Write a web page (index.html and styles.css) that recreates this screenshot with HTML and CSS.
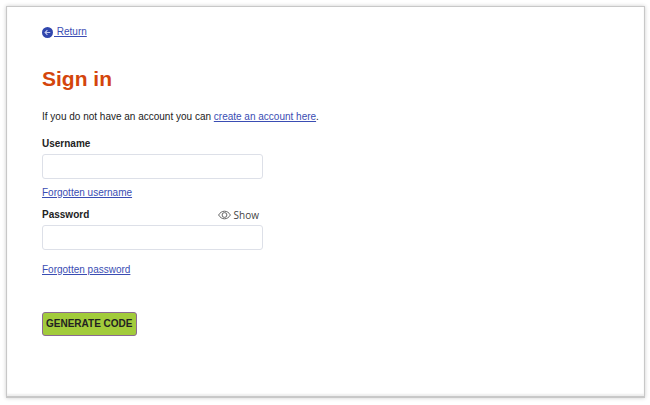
FILE: index.html
```html
<!DOCTYPE html>
<html lang="en">
<head>
<meta charset="utf-8">
<title>Sign in</title>
<link rel="stylesheet" href="styles.css">
</head>
<body>
<main class="panel">
  <a class="return" href="#"><svg class="return-icon" viewBox="0 0 10 10" aria-hidden="true"><circle cx="5" cy="5" r="5" fill="#3046ad"/><path d="M7.500 5H2.800M4.900 2.900L2.800 5l2.100 2.100" fill="none" stroke="#c3cbf0" stroke-width="1"/></svg><span class="return-text">&nbsp;Return</span></a>
  <h1 class="title">Sign in</h1>
  <p class="intro">If you do not have an account you can <a href="#">create an account here</a>.</p>
  <form class="form">
    <div class="field">
      <label class="label" for="username">Username</label>
      <input class="input" id="username" type="text">
      <a class="help" href="#">Forgotten username</a>
    </div>
    <div class="field field-password">
      <div class="label-row">
        <label class="label" for="password">Password</label>
        <button class="show" type="button"><svg class="eye" viewBox="0 0 13 10" fill="none" stroke="#666" aria-hidden="true"><path d="M.6 5C2 2.600 4.100 1.200 6.500 1.200S11 2.600 12.400 5C11 7.400 8.900 8.800 6.500 8.800S2 7.400.6 5z"/><circle cx="6.500" cy="5" r="2.400"/></svg>Show</button>
      </div>
      <input class="input" id="password" type="password">
      <a class="help" href="#">Forgotten password</a>
    </div>
    <button class="submit" type="submit">GENERATE CODE</button>
  </form>
</main>
</body>
</html>
```
FILE: styles.css
```css
* {
  box-sizing: border-box;
}

body {
  display: flex;
  min-height: 100vh;
  margin: 0;
  padding: 6px 5px 7px 6px;
  background: #fff;
  color: #222;
  font: 10px/16px "Liberation Sans", Arial, sans-serif;
}

a {
  color: #3a4db3;
}

.panel {
  flex: 1;
  padding: 17px 35px;
  border: 1px solid #c8c8c8;
  border-bottom: 2px solid #c8c8c8;
  box-shadow: 0 0 4px rgba(0, 0, 0, 0.2), inset 0 -2px 2px #eee;
}

.return {
  display: inline-flex;
  align-items: center;
  gap: 1px;
  text-decoration: none;
}

.return-icon {
  width: 11px;
  height: 11px;
}

.return-text {
  text-decoration: underline;
}

.title {
  margin: 22px 0 16px;
  color: #d4450c;
  font-size: 21px;
  line-height: 28px;
}

.intro {
  margin: 0 0 11px;
}

.field {
  display: flex;
  flex-direction: column;
  align-items: flex-start;
  width: 221px;
  max-width: 100%;
}

.label {
  font-weight: bold;
}

.input {
  width: 100%;
  height: 25px;
  margin: 2px 0 6px;
  padding: 0 6px;
  border: 1px solid #dde0e8;
  border-radius: 3px;
  background: #fff;
  font: inherit;
}

.field-password {
  margin-top: 6px;
}

.field-password .input {
  margin-bottom: 12px;
}

.label-row {
  display: flex;
  align-items: center;
  justify-content: space-between;
  width: 100%;
  padding-right: 4px;
}

.show {
  display: flex;
  align-items: center;
  gap: 3px;
  padding: 0;
  border: 0;
  background: none;
  color: #444;
  font: 10px/16px "Open Sans", sans-serif;
}

.eye {
  width: 13px;
  height: 10px;
}

.submit {
  height: 24px;
  margin-top: 34px;
  padding: 0 3px;
  border: 1px solid #8b6a91;
  border-radius: 3px;
  background: #a2cb3b;
  color: #222;
  font: bold 10px/16px "Liberation Sans", Arial, sans-serif;
}
```
